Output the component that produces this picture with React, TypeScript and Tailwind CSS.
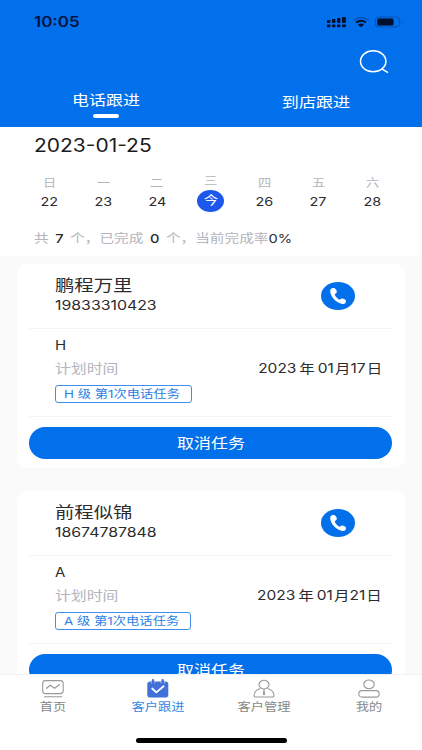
import React from "react";

const days = [
  ["日", "22"],
  ["一", "23"],
  ["二", "24"],
  ["三", "今"],
  ["四", "26"],
  ["五", "27"],
  ["六", "28"],
];

const tasks = [
  { name: "鹏程万里", phone: "19833310423", level: "H", date: ["2023", "01", "17"], tagWidth: "w-[137px]" },
  { name: "前程似锦", phone: "18674787848", level: "A", date: ["2023", "01", "21"], tagWidth: "w-[136px]" },
];

function Wide({ className = "", children }: { className?: string; children: React.ReactNode }) {
  return <span className={"inline-block whitespace-nowrap " + className}>{children}</span>;
}

function StatusBar() {
  return (
    <div className="flex h-[44px] items-center justify-between pl-[34px] pr-[19px]">
      <Wide className="origin-left scale-x-[1.21] text-[14px] leading-[20px] font-semibold text-[#04123f]">10:05</Wide>
      <div className="flex items-center">
        <svg width="20" height="12" viewBox="0 0 20 12" fill="#020f2c">
          <rect x="0" y="4" width="3.4" height="3" rx=".7" />
          <rect x="5" y="3" width="3.4" height="4" rx=".7" />
          <rect x="10" y="2" width="3.4" height="5" rx=".7" />
          <rect x="15" y="1" width="3.8" height="6" rx=".7" />
          <rect x="0" y="8.5" width="3.4" height="2.7" rx=".8" />
          <rect x="5" y="8.5" width="3.4" height="2.7" rx=".8" />
          <rect x="10" y="8.5" width="3.4" height="2.7" rx=".8" />
          <rect x="15" y="8.5" width="3.8" height="2.7" rx=".8" />
        </svg>
        <svg className="ml-[5px]" width="18" height="12" viewBox="0 0 18 12" fill="none">
          <path d="M1.5 4.2Q9-1.2 16.5 4.2" stroke="#0450b4" strokeWidth="1.6" />
          <path d="M4 6.6Q9 2.8 14 6.6" stroke="#020f2c" strokeWidth="1.9" />
          <path d="M6 8.8Q9 6.4 12 8.8L9 11.2Z" fill="#020f2c" />
        </svg>
        <svg className="ml-[5px]" width="28" height="12" viewBox="0 0 28 12" fill="none">
          <rect x=".5" y="1" width="24" height="10" rx="3" stroke="#0450b4" />
          <rect x="2.2" y="2.6" width="16.3" height="6.9" rx="1.5" fill="#020f2c" />
          <path d="M26 4Q27.6 6 26 8Z" fill="#0450b4" />
        </svg>
      </div>
    </div>
  );
}

function PhoneButton() {
  return (
    <svg width="34" height="28" viewBox="0 0 34 28">
      <ellipse cx="17" cy="14" rx="17" ry="14" fill="#0370eb" />
      <path
        d="M12.3 6.1C10.4 6 9 7.4 9.2 9.5C10 16 15.6 21 21.8 22C23.6 22.2 25.1 20.7 25 18.9C24.9 17.5 22 16.1 20.7 16.5C19.6 16.9 19.2 18.2 18.2 17.6C16.5 16.6 14.5 14.6 13.8 13C13.4 12 15.6 11.3 15.8 10C16.1 8.2 14 6.1 12.3 6.1Z"
        fill="white"
      />
    </svg>
  );
}

function TaskCard({ task }: { task: (typeof tasks)[number] }) {
  return (
    <section className="mb-[23px] h-[204px] shrink-0 rounded-[10px] bg-white pr-[13px] pl-[12px]">
      <div className="flex h-[65px] justify-between border-b border-[#f4f4f5] pr-[37px] pl-[26px]">
        <div className="flex flex-col pt-[10px]">
          <Wide className="origin-left scale-x-[1.21] text-[16px] leading-[22px] text-[#2c2c2e]">{task.name}</Wide>
          <Wide className="origin-left scale-x-[1.22] text-[13px] leading-[18px] text-[#2c2c2e]">{task.phone}</Wide>
        </div>
        <div className="pt-[18px]">
          <PhoneButton />
        </div>
      </div>
      <div className="h-[88px] border-b border-[#f4f4f5] pr-[10px] pl-[26px]">
        <div className="flex h-[27px] items-end">
          <Wide className="origin-left scale-x-[1.2] text-[12.5px] leading-[20px] text-[#2c2c2e]">{task.level}</Wide>
        </div>
        <div className="flex h-[24px] items-center justify-between">
          <Wide className="origin-left scale-x-[1.22] text-[13px] leading-[20px] text-[#b4b4bd]">计划时间</Wide>
          <Wide className="origin-right scale-x-[1.19] text-[13px] leading-[20px] text-[#2c2c2e]">
            {task.date[0]}<span className="mx-[2.5px]">年</span>{task.date[1]}<span className="ml-[1px]">月</span>{task.date[2]}<span className="ml-[1px]">日</span>
          </Wide>
        </div>
        <div className={"mt-[5px] flex h-[18px] items-center rounded-[3px] border border-[#3f8ef0] pl-[8px] " + task.tagWidth}>
          <Wide className="origin-left scale-x-[1.21] text-[11px] leading-[16px] text-[#2c7fe8]">
            {task.level} 级 第1次电话任务
          </Wide>
        </div>
      </div>
      <button className="mt-[10px] flex h-[32px] w-full items-center justify-center rounded-full bg-[#0370eb] text-white">
        <Wide className="scale-x-[1.21] text-[14px] leading-[20px]">取消任务</Wide>
      </button>
    </section>
  );
}

function TabIcon({ kind }: { kind: number }) {
  return (
    <svg width="24" height="20" viewBox="0 0 24 20" fill="none" stroke="#999" strokeWidth="1.1">
      {kind === 0 && (
        <>
          <rect x="1.7" y="1.6" width="20.5" height="13" rx="2.8" />
          <path d="M5.5 9.3L9.3 6.2L13.7 9.3L18.5 5.5M3.5 17.8H20.8" strokeLinecap="round" />
        </>
      )}
      {kind === 1 && (
        <>
          <rect x="1.3" y="2.5" width="21" height="16.1" rx="2.8" fill="#4170d8" stroke="none" />
          <path d="M7 1.2V4M16.7 1.2V4" stroke="#4170d8" strokeWidth="2.4" strokeLinecap="round" />
          <path d="M5.2 3V4.3M8.8 3V4.3M14.9 3V4.3M18.5 3V4.3" stroke="white" strokeWidth=".6" />
          <path d="M6.2 9.5L10.3 13.4L17.6 7.3" stroke="white" strokeWidth="1.8" strokeLinecap="round" />
        </>
      )}
      {kind === 2 && (
        <>
          <ellipse cx="12" cy="5.6" rx="5" ry="4.4" />
          <path d="M8.5 9.5C4.2 10.7 2 13.5 2 16.7Q2 18 3.5 18H20.5Q22 18 22 16.7C22 13.5 19.8 10.7 15.5 9.5" />
          <path d="M12 10.7L11.2 15L12 16.2L12.8 15Z" fill="#999" strokeWidth=".8" />
        </>
      )}
      {kind === 3 && (
        <>
          <ellipse cx="12" cy="5.4" rx="5.2" ry="4.4" />
          <rect x="1.8" y="11.6" width="20.4" height="6.5" rx="3.2" />
        </>
      )}
    </svg>
  );
}

export default function App() {
  return (
    <div className="flex h-[750px] w-[422px] flex-col overflow-hidden bg-[#fafafa] font-[Inter,'Noto_Sans_CJK_SC',sans-serif]">
      <header className="h-[127px] shrink-0 bg-[#0370eb] text-white">
        <StatusBar />
        <div className="flex h-[40px] justify-end pt-[5px] pr-[32px]">
          <svg width="31" height="26" viewBox="0 0 31 26" fill="none" stroke="white" strokeWidth="1.5">
            <ellipse cx="14.2" cy="12.3" rx="12.7" ry="10.5" />
            <path d="M22.5 19.6L29 23.6" />
          </svg>
        </div>
        <nav className="flex text-[14px] leading-[20px]">
          <div className="flex w-[211px] flex-col items-center pt-[6px]">
            <Wide className="scale-x-[1.21]">电话跟进</Wide>
            <i className="mt-[4px] h-[4px] w-[26px] rounded-full bg-white" />
          </div>
          <div className="flex w-[210px] justify-center pt-[8px]">
            <Wide className="scale-x-[1.22]">到店跟进</Wide>
          </div>
        </nav>
      </header>
      <section className="h-[129px] shrink-0 bg-white">
        <div className="flex h-[37px] items-center pl-[34px]">
          <Wide className="origin-left scale-x-[1.165] text-[18px] leading-[24px] text-[#1c1c1e]">2023-01-25</Wide>
        </div>
        <div className="flex pl-[22.5px]">
          {days.map(([label, date], i) => (
            <div key={label} className="flex w-[53.8px] shrink-0 flex-col items-center">
              <Wide className={"scale-x-[1.2] text-[11px] text-[#b4b4bd] " + (i === 3 ? "h-[26px] pt-[9px] leading-[16px]" : "h-[29px] pt-[11px] leading-[16px]")}>
                {label}
              </Wide>
              {i === 3 ? (
                <div className="flex h-[22px] w-[27px] items-center justify-center rounded-[50%] bg-[#1d57ec] text-white">
                  <Wide className="scale-x-[1.2] text-[12px] leading-[18px]">{date}</Wide>
                </div>
              ) : (
                <Wide className="scale-x-[1.2] text-[12px] leading-[18px] text-[#2c2c2e]">{date}</Wide>
              )}
            </div>
          ))}
        </div>
        <div className="flex h-[53px] items-center pl-[34px]">
          <Wide className="origin-left scale-x-[1.22] text-[12px] leading-[18px] text-[#b4b4bd]">
            共 <b className="mx-[2px] font-medium text-[#2c2c2e]">7</b> 个，已完成 <b className="mx-[2px] font-medium text-[#2c2c2e]">0</b> 个，当前完成率
            <span className="text-[#2c2c2e]">0%</span>
          </Wide>
        </div>
      </section>
      <main className="flex min-h-0 flex-1 flex-col overflow-hidden pt-[8px] pr-[17px] pl-[17px]">
        {tasks.map((task) => (
          <TaskCard key={task.name} task={task} />
        ))}
      </main>
      <footer className="flex h-[76px] shrink-0 flex-col items-center border-t border-[#f1f1f1] bg-white">
        <nav className="flex w-full pt-[4px]">
          {["首页", "客户跟进", "客户管理", "我的"].map((label, i) => (
            <div key={label} className="flex w-1/4 flex-col items-center">
              <TabIcon kind={i} />
              <Wide className={"scale-x-[1.2] text-[11px] leading-[16px] " + (i === 1 ? "text-[#3488e5]" : "text-[#888]")}>{label}</Wide>
            </div>
          ))}
        </nav>
        <div className="mt-[23px] h-[5px] w-[151px] rounded-full bg-black" />
      </footer>
    </div>
  );
}
